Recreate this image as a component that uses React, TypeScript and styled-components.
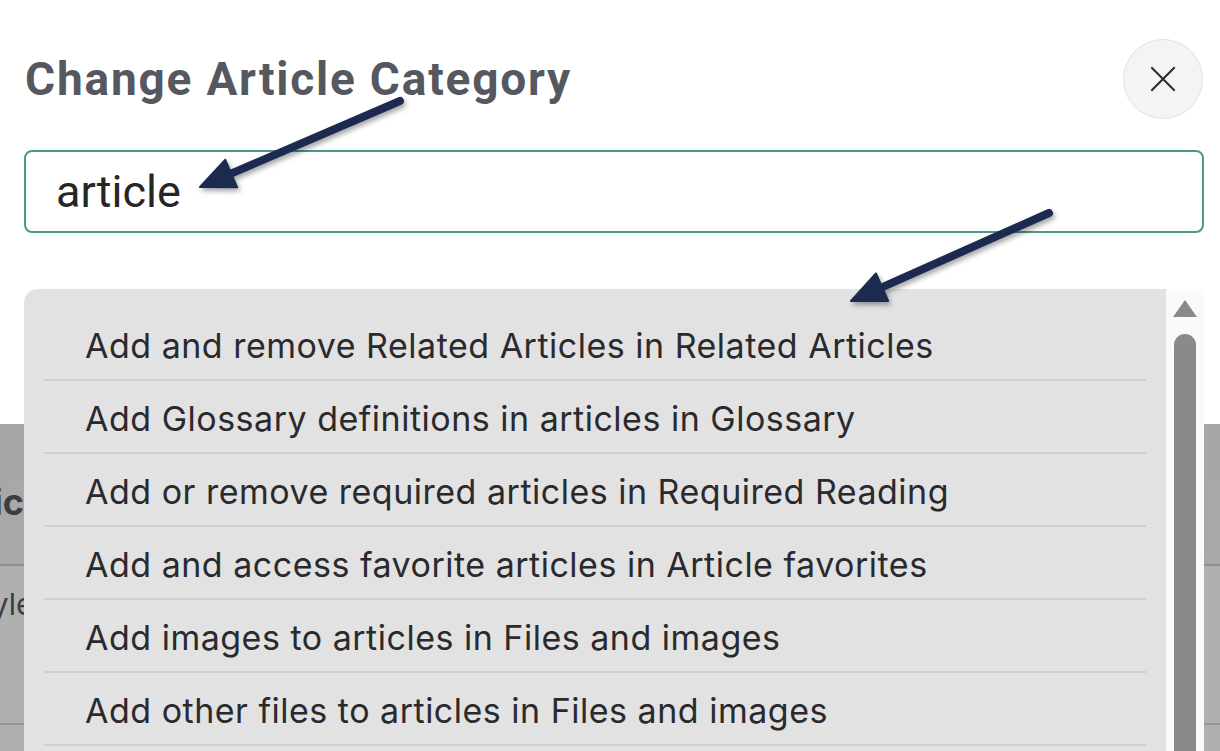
import React from "react";
import styled, { createGlobalStyle } from "styled-components";

const GlobalStyle = createGlobalStyle`
  html, body {
    margin: 0;
    padding: 0;
    overflow: hidden;
  }
  * {
    box-sizing: border-box;
  }
`;

const options = [
  "Add and remove Related Articles in Related Articles",
  "Add Glossary definitions in articles in Glossary",
  "Add or remove required articles in Required Reading",
  "Add and access favorite articles in Article favorites",
  "Add images to articles in Files and images",
  "Add other files to articles in Files and images",
  "Add videos to articles in Files and images",
];

// annotation arrows: start of shaft -> tip
const arrows = [
  { x1: 400, y1: 101, x2: 200, y2: 187 },
  { x1: 1049, y1: 213, x2: 851, y2: 301 },
];

const arrowHead = (a: { x1: number; y1: number; x2: number; y2: number }) => {
  const dx = a.x2 - a.x1;
  const dy = a.y2 - a.y1;
  const len = Math.sqrt(dx * dx + dy * dy);
  const ux = dx / len;
  const uy = dy / len;
  const headLen = 34;
  const half = 15;
  const bx = a.x2 - ux * headLen;
  const by = a.y2 - uy * headLen;
  const p1 = `${bx - uy * half},${by + ux * half}`;
  const p2 = `${bx + uy * half},${by - ux * half}`;
  return {
    points: `${a.x2},${a.y2} ${p1} ${p2}`,
    sx: bx + ux * 4,
    sy: by + uy * 4,
  };
};

export default function App() {
  return (
    <Page>
      <GlobalStyle />
      <Modal>
        <Header>
          <Title>Change Article Category</Title>
          <CloseButton aria-label="Close">
            <svg width="26" height="26" viewBox="0 0 26 26">
              <path d="M2 2 L24 24 M24 2 L2 24" stroke="#2b2b2b" strokeWidth="2" strokeLinecap="square" />
            </svg>
          </CloseButton>
        </Header>
        <SearchBox>article</SearchBox>
      </Modal>

      <Behind>
        <BehindBand>
          <BehindHeading>Topic</BehindHeading>
        </BehindBand>
        <BehindRow>
          <BehindText>Style</BehindText>
        </BehindRow>
        <BehindRow $short />
      </Behind>

      <Dropdown>
        <OptionList>
          {options.map((o) => (
            <Option key={o}>{o}</Option>
          ))}
        </OptionList>
        <ScrollTrack>
          <ScrollArrow />
          <ScrollThumb />
        </ScrollTrack>
      </Dropdown>

      <ArrowLayer width="1220" height="751" viewBox="0 0 1220 751">
        <defs>
          <filter id="shadow" x="-20%" y="-20%" width="140%" height="140%">
            <feDropShadow dx="2" dy="3" stdDeviation="2.5" floodColor="#000" floodOpacity="0.35" />
          </filter>
        </defs>
        {arrows.map((a, i) => {
          const h = arrowHead(a);
          return (
            <g key={i} filter="url(#shadow)" fill="#1e2a50" stroke="#1e2a50">
              <line x1={a.x1} y1={a.y1} x2={h.sx} y2={h.sy} strokeWidth="8" strokeLinecap="round" />
              <polygon points={h.points} strokeWidth="2" strokeLinejoin="round" />
            </g>
          );
        })}
      </ArrowLayer>
    </Page>
  );
}

const Page = styled.div`
  position: relative;
  width: 1220px;
  height: 751px;
  overflow: hidden;
  background: #afafaf;
  font-family: Inter, "Liberation Sans", sans-serif;
`;

const Modal = styled.div`
  height: 424px;
  background: #ffffff;
  padding: 39px 17px 0 24px;
`;

const Header = styled.div`
  display: flex;
  justify-content: space-between;
  align-items: flex-start;
  height: 111px;
`;

const Title = styled.h1`
  margin: 12px 0 0 1px;
  font-family: Roboto, "Liberation Sans", sans-serif;
  font-weight: 700;
  font-size: 46px;
  letter-spacing: 1.8px;
  line-height: 56px;
  color: #55585f;
`;

const CloseButton = styled.button`
  width: 80px;
  height: 80px;
  border-radius: 50%;
  border: 1px solid #e1e1e1;
  background: #f4f4f4;
  display: flex;
  align-items: center;
  justify-content: center;
  padding: 0;
  cursor: pointer;
`;

const SearchBox = styled.div`
  width: 1180px;
  height: 83px;
  border: 2px solid #4b9a89;
  border-radius: 8px;
  padding-left: 30px;
  display: flex;
  align-items: center;
  font-family: Roboto, "Liberation Sans", sans-serif;
  font-size: 45px;
  color: #262626;
`;

const Behind = styled.div`
  display: flex;
  flex-direction: column;
`;

const BehindBand = styled.div`
  height: 142px;
  background: linear-gradient(#a6a6a6, #a9a9a9);
  border-bottom: 2px solid #919191;
  display: flex;
  align-items: center;
  padding-top: 16px;
`;

const BehindHeading = styled.div`
  margin-left: -73px;
  font-family: Inter, "Liberation Sans", sans-serif;
  font-weight: 700;
  font-size: 36px;
  color: #3b3e45;
  white-space: nowrap;
`;

const BehindRow = styled.div<{ $short?: boolean }>`
  height: ${(p) => (p.$short ? "40px" : "159px")};
  border-bottom: ${(p) => (p.$short ? "none" : "2px solid #959595")};
  background: #b0b0b0;
  padding-top: 20px;
`;

const BehindText = styled.div`
  margin-left: -38px;
  font-size: 30px;
  color: #3b3e45;
  white-space: nowrap;
`;

const Dropdown = styled.div`
  position: absolute;
  top: 289px;
  left: 24px;
  width: 1180px;
  bottom: 0;
  display: flex;
`;

const OptionList = styled.ul`
  flex: 1;
  margin: 0;
  list-style: none;
  background: #e2e2e2;
  border-top-left-radius: 14px;
  padding: 19px 20px 0 20px;
  overflow: hidden;
`;

const Option = styled.li`
  height: 73px;
  border-bottom: 2px solid #cfcfcf;
  padding: 3px 0 0 41px;
  display: flex;
  align-items: center;
  font-family: Inter, "Liberation Sans", sans-serif;
  font-size: 34px;
  letter-spacing: 0.5px;
  color: #2a2a2e;
  white-space: nowrap;
  cursor: pointer;
`;

const ScrollTrack = styled.div`
  width: 38px;
  background: #fafafa;
  display: flex;
  flex-direction: column;
  align-items: center;
  padding-top: 11px;
`;

const ScrollArrow = styled.div`
  width: 0;
  height: 0;
  border-left: 12px solid transparent;
  border-right: 12px solid transparent;
  border-bottom: 17px solid #8a8a8a;
`;

const ScrollThumb = styled.div`
  margin-top: 17px;
  width: 22px;
  flex: 1;
  background: #8a8a8a;
  border-radius: 11px 11px 0 0;
`;

const ArrowLayer = styled.svg`
  position: absolute;
  top: 0;
  left: 0;
  pointer-events: none;
`;
